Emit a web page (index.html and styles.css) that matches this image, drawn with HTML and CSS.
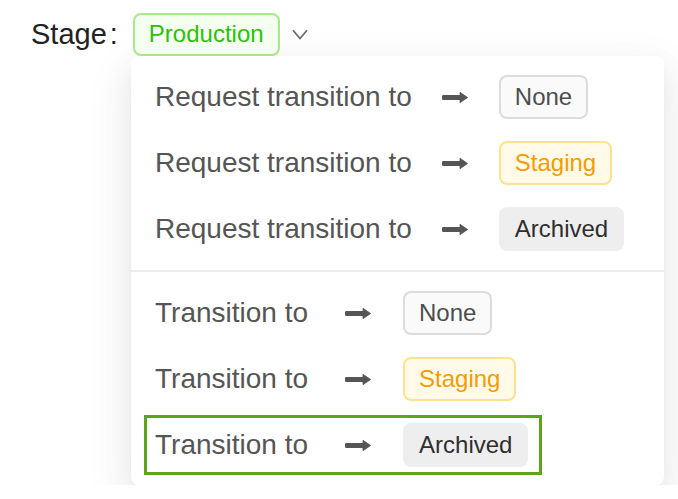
FILE: index.html
```html
<!DOCTYPE html>
<html lang="en">
<head>
<meta charset="utf-8">
<title>Stage transition</title>
<link rel="stylesheet" href="styles.css">
</head>
<body>
<div class="page">
  <div class="field">
    <span class="label">Stage</span><span class="colon">:</span>
    <span class="tag tag-success">Production</span>
    <svg class="chevron" viewBox="0 0 16 11" width="16" height="11" aria-hidden="true"><path d="M1 1.2 L8 9.5 L15 1.2" fill="none" stroke="#666" stroke-width="1.6" stroke-linejoin="miter"/></svg>
  </div>

  <div class="menu">
    <div class="item">
      <span class="item-text">Request transition to</span>
      <svg class="arrow" viewBox="0 0 26 11" width="26" height="11" aria-hidden="true"><rect x="0" y="3" width="20" height="5" rx="1.2" fill="#555"/><path d="M18 0.3 L25.6 5.5 L18 10.7 Z" fill="#555" stroke="#555" stroke-width="0.8" stroke-linejoin="round"/></svg>
      <span class="tag tag-default">None</span>
    </div>
    <div class="item">
      <span class="item-text">Request transition to</span>
      <svg class="arrow" viewBox="0 0 26 11" width="26" height="11" aria-hidden="true"><rect x="0" y="3" width="20" height="5" rx="1.2" fill="#555"/><path d="M18 0.3 L25.6 5.5 L18 10.7 Z" fill="#555" stroke="#555" stroke-width="0.8" stroke-linejoin="round"/></svg>
      <span class="tag tag-warning">Staging</span>
    </div>
    <div class="item">
      <span class="item-text">Request transition to</span>
      <svg class="arrow" viewBox="0 0 26 11" width="26" height="11" aria-hidden="true"><rect x="0" y="3" width="20" height="5" rx="1.2" fill="#555"/><path d="M18 0.3 L25.6 5.5 L18 10.7 Z" fill="#555" stroke="#555" stroke-width="0.8" stroke-linejoin="round"/></svg>
      <span class="tag tag-archived">Archived</span>
    </div>

    <div class="divider"></div>

    <div class="item item-direct">
      <span class="item-text">Transition to</span>
      <svg class="arrow" viewBox="0 0 26 11" width="26" height="11" aria-hidden="true"><rect x="0" y="3" width="20" height="5" rx="1.2" fill="#555"/><path d="M18 0.3 L25.6 5.5 L18 10.7 Z" fill="#555" stroke="#555" stroke-width="0.8" stroke-linejoin="round"/></svg>
      <span class="tag tag-default">None</span>
    </div>
    <div class="item item-direct">
      <span class="item-text">Transition to</span>
      <svg class="arrow" viewBox="0 0 26 11" width="26" height="11" aria-hidden="true"><rect x="0" y="3" width="20" height="5" rx="1.2" fill="#555"/><path d="M18 0.3 L25.6 5.5 L18 10.7 Z" fill="#555" stroke="#555" stroke-width="0.8" stroke-linejoin="round"/></svg>
      <span class="tag tag-warning">Staging</span>
    </div>
    <div class="item item-direct">
      <div class="highlight">
        <span class="item-text">Transition to</span>
        <svg class="arrow" viewBox="0 0 26 11" width="26" height="11" aria-hidden="true"><rect x="0" y="3" width="20" height="5" rx="1.2" fill="#555"/><path d="M18 0.3 L25.6 5.5 L18 10.7 Z" fill="#555" stroke="#555" stroke-width="0.8" stroke-linejoin="round"/></svg>
        <span class="tag tag-archived">Archived</span>
      </div>
    </div>
  </div>
</div>
</body>
</html>
```

FILE: styles.css
```css
* {
  box-sizing: border-box;
}

html, body {
  margin: 0;
  padding: 0;
  background: #ffffff;
}

body {
  font-family: "Liberation Sans", Arial, Helvetica, sans-serif;
  color: #262626;
}

.page {
  padding-top: 12px;
}

.field {
  display: flex;
  align-items: center;
  height: 44px;
  padding-left: 31px;
}

.label {
  font-size: 29px;
  color: #222222;
}

.colon {
  font-size: 29px;
  color: #222222;
  margin-left: 3px;
  margin-right: 15px;
}

.chevron {
  margin-left: 12px;
  margin-top: 1px;
}

.tag {
  display: inline-flex;
  align-items: center;
  height: 44px;
  padding: 0 14px;
  border: 2px solid transparent;
  border-radius: 8px;
  font-size: 24px;
  line-height: 40px;
  white-space: nowrap;
}

.tag-success {
  color: #2cbf0c;
  background: #f4fff0;
  border-color: #a9e88a;
  height: 43px;
}

.tag-default {
  color: #4d4d4d;
  background: #fafafa;
  border-color: #dcdcdc;
}

.tag-warning {
  color: #f49c00;
  background: #fffbe8;
  border-color: #fce28f;
}

.tag-archived {
  color: #2e2e2e;
  background: #eeeeee;
  border-color: #eeeeee;
}

.menu {
  margin-left: 131px;
  width: 533px;
  background: #ffffff;
  border-radius: 8px;
  padding: 8px 0 7px;
  box-shadow: 0 12px 32px rgba(0, 0, 0, 0.07), 0 6px 12px -8px rgba(0, 0, 0, 0.1), 0 16px 48px 10px rgba(0, 0, 0, 0.045);
}

.item {
  display: flex;
  align-items: center;
  height: 66px;
  padding-left: 24px;
  font-size: 28px;
  color: #555555;
}

.item-text {
  white-space: nowrap;
}

.arrow {
  margin-left: 30px;
  margin-right: 31px;
  flex: none;
}

.item-direct .arrow {
  margin-left: 37px;
  margin-right: 32px;
}

.divider {
  height: 2px;
  background: #ebebeb;
  margin: 8px 0;
}

.highlight {
  display: flex;
  align-items: center;
  height: 60px;
  margin-left: -11px;
  padding: 0 11px 0 8px;
  border: 3px solid #5ba51c;
}
```
